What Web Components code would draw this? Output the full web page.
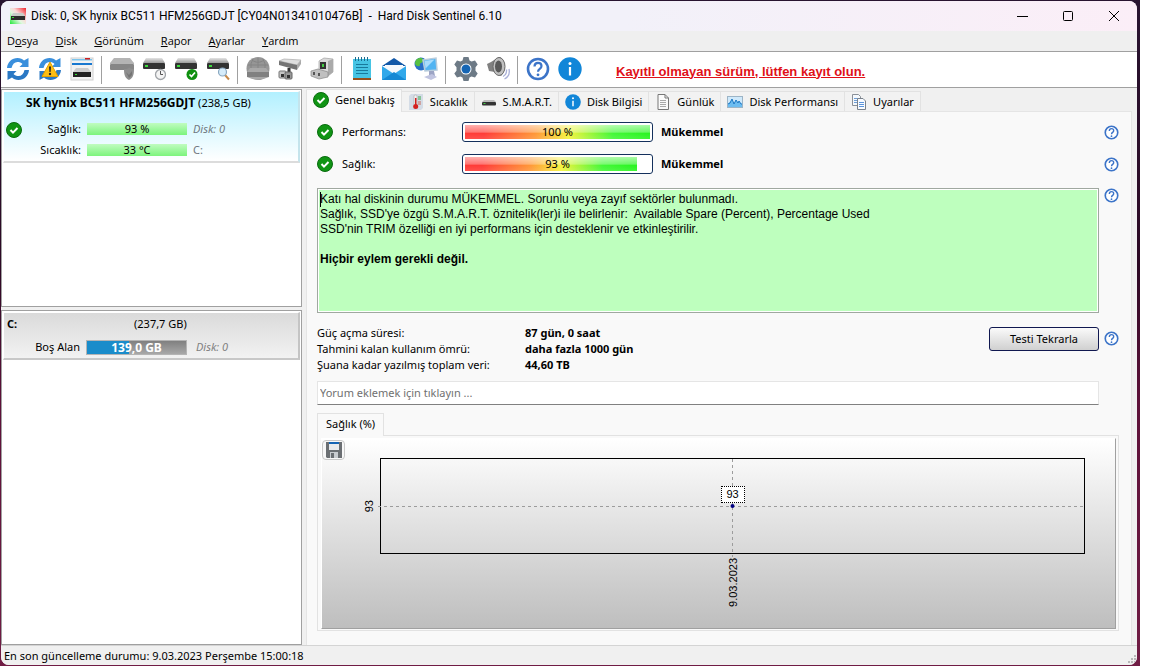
<!DOCTYPE html>
<html lang="tr">
<head>
<meta charset="utf-8">
<title>Hard Disk Sentinel 6.10</title>
<style>
  html, body { margin: 0; }
  body {
    font: 11px/16px "Noto Sans", "Open Sans", sans-serif;
    color: #000;
    background: #fff;
    min-height: 100vh;
  }
</style>
</head>
<body>
<hds-desktop></hds-desktop>
<script>
const grads = {
  disk: '<linearGradient id="g" x1="0" y1="0" x2="0" y2="1"><stop offset="0" stop-color="#e4e4e4"/><stop offset="1" stop-color="#9a9a9a"/></linearGradient>'
};
const drive = `<defs>${grads.disk}</defs><path d="M4 6h16l3 5H1z" fill="url(#g)"/><rect x="1" y="11" width="22" height="6" rx="1" fill="#333"/><rect x="3" y="13" width="3" height="2" fill="#3ddc3d"/>`;
const sync = '<path d="M1 11C1.500 5 6 1 11.500 1c3 0 5 1 6.500 2.500L22.500 1v9h-9l3-3C15 5.600 13.500 5 11.500 5 8.500 5 6.500 7 5.500 11z" fill="#3a8fdc"/><path d="M23 13c-.5 6-5 10-10.500 10-3 0-5-1-6.500-2.500L1.500 23v-9h9l-3 3c1.500 1.400 3 2 5 2 3 0 5-2 6-6z" fill="#2a78c4"/>';
const ICONS = {
  app: ['16', '<defs><linearGradient id="r" x1="1" y1="0" x2="0" y2="1"><stop offset="0" stop-color="#f02028"/><stop offset=".4" stop-color="#fbd8d8"/><stop offset=".6" stop-color="#e0f8e0"/><stop offset="1" stop-color="#20e838"/></linearGradient></defs><rect width="16" height="16" fill="url(#r)"/><path d="M3 5h10l2 3H1z" fill="#c8ccc8"/><rect x="1" y="8" width="14" height="4" fill="#2c2c2c"/><rect x="2" y="9" width="2" height="1" fill="#3d3"/>'],
  sync: ['24', sync],
  syncwarn: ['24', sync + '<path d="M12 5l8 14.500H4z" fill="#fdbe14" stroke="#e0a000" stroke-linejoin="round"/><path d="M11 9.500h2l-.4 5.500h-1.200z" fill="#222"/><circle cx="12" cy="17" r="1.200" fill="#222"/>'],
  panel: ['24', '<rect x="1" y="1" width="22" height="22" fill="#f2f2f2" stroke="#d0d0d0"/><rect x="2" y="2" width="20" height="1.500" fill="#7cc4ec"/><rect x="15" y="1" width="5" height="1.500" fill="#d02020"/><rect x="2" y="6" width="20" height="2" fill="#1878d0"/><path d="M6 11h12l3 4H3z" fill="#ccc"/><rect x="3" y="15" width="18" height="5" fill="#222"/><rect x="5" y="17" width="2" height="1" fill="#3d3"/>'],
  disk1: ['24', '<path d="M4 1h16l4 5v1H0V6z" fill="#b4b4b4"/><rect y="7" width="24" height="6" rx="1" fill="#868686"/><path d="M14 12q5 0 5-2 1 2 5 2c0 6-1 9-5 11-4-2-5-5-5-11z" fill="#8e8e8e"/><path d="M16 15l3 3 3-4v4l-3 3z" fill="#747474"/>'],
  disk2: ['24', '<g transform="translate(0 -5)">' + drive + '</g><circle cx="18.500" cy="17.500" r="5" fill="#f4f4f4" stroke="#a0a4a8" stroke-width="1.300"/><path d="M18.500 14v3.500H21" stroke="#555" fill="none"/>'],
  disk3: ['24', '<g transform="translate(0 -5)">' + drive + '</g><circle cx="18" cy="17.500" r="5.500" fill="#109010"/><path d="M15.500 17.500l2 2 3.500-4" stroke="#fff" stroke-width="1.700" fill="none"/>'],
  disk4: ['24', '<g transform="translate(0 -5)">' + drive + '</g><path d="M19 18l4 4.500" stroke="#c88a4a" stroke-width="2"/><circle cx="16.500" cy="15" r="4" fill="#d6ecfa" stroke="#8aa8c0" stroke-width="1.200"/>'],
  globe: ['24', '<circle cx="12" cy="11.500" r="11.500" fill="#969696"/><path d="M6 3c4 3 8 3 12 0M2 8h20M12 1v10M7 2q-3 5-2 9M17 2q3 5 2 9" stroke="#848484" fill="none"/><path d="M4 11h16l3 4v5q-11 5-22 0v-5z" fill="#a8a8a8"/><rect x="1" y="15" width="22" height="5" fill="#808080"/>'],
  plug: ['24', '<path d="M1 4l5-2 17 1-4 5z" fill="#dedede" stroke="#aaa" stroke-width=".7"/><path d="M1 4l18 4v5L1 8z" fill="#747474"/><path d="M19 8l4-5v4l-4 6z" fill="#aaa"/><path d="M11 11v5" stroke="#333" stroke-width="3"/><rect x="1" y="14" width="7" height="7" rx="1" fill="#c4c4c4" stroke="#777"/><rect x="7" y="15" width="7" height="7" rx="1" fill="#999" stroke="#666"/><path d="M3 17h3v3H3zM9 18h3v3H9z" fill="#333"/>'],
  plug2: ['24', '<path d="M9 4l5-3 9 1v13l-5 4-9-2z" fill="#dadada" stroke="#a0a0a0" stroke-width=".7"/><path d="M18 4l5-2v13l-5 4z" fill="#aaa"/><rect x="10" y="5" width="6" height="7" fill="#333"/><path d="M12 7h2v3h-2z" fill="#4c4"/><path d="M1 14l7-2 10 3v5l-9 2-8-3z" fill="#c0c0c0" stroke="#888" stroke-width=".7"/><path d="M3 15h2v3H3zM8 16h2v3H8z" fill="#555"/>'],
  note: ['24', '<rect x="3" y="2" width="18" height="19" fill="#46c4e4"/><rect x="3" y="21" width="18" height="2" fill="#96501c"/><path d="M5.500 0v4M8.500 0v4M11.500 0v4M14.500 0v4M17.500 0v4" stroke="#1a6d90"/><path d="M6 7.500h12M6 10.500h12M6 13.500h12M6 16.500h12" stroke="#187a9c"/>'],
  mail: ['24', '<path d="M0 9L12 1l12 8z" fill="#1258a8"/><path d="M3 8h18v9H3z" fill="#f4f8fc"/><path d="M0 9l12 8L24 9v14H0z" fill="#30a8ea"/><path d="M0 23l12-8 12 8z" fill="#1488d4"/>'],
  net: ['24', '<circle cx="7" cy="7" r="6.500" fill="#2870c8"/><path d="M2 3c4-4 8-2 7 1s-4 1-3 5C1 10 0 6 2 3z" fill="#58c040"/><path d="M9 3l13-2 1 12-12 1z" fill="#52b4f2" stroke="#b8ccdc" stroke-width="1.500"/><path d="M10.500 4l10-1.500-9 9z" fill="#a8dcfc"/><path d="M15 14h5l1 5h-6z" fill="#9ca4c4"/><path d="M10 20l8-3 5 3-6 3z" fill="#c0c4e0"/>'],
  gear: ['24', '<path d="M9.500 0h5l1 3.500 2 1L21 3.500l2.700 4-2.200 2.800v3.400l2.200 2.800-2.700 4-3.500-1-2 1-1 3.500h-5l-1-3.500-2-1-3.500 1-2.700-4 2.200-2.800v-3.400L.3 7.500 3 3.500l3.500 1 2-1z" fill="#6d7a86"/><circle cx="12" cy="12" r="5.500" fill="#fff"/><circle cx="12" cy="12" r="4.500" fill="#1565b4"/>'],
  sound: ['24', '<path d="M1 7l4-2 8-5c7 1 7 16 2 19l-6-4-6-1z" fill="#808080"/><ellipse cx="13" cy="9.500" rx="6" ry="9" fill="#c0c0c0" stroke="#686868"/><ellipse cx="12.500" cy="9.500" rx="3.500" ry="6" fill="#585858"/><path d="M17 19.500q4-2 3.500-7M18.500 22q6-3 4.500-10" stroke="#aab0d8" stroke-width="1.300" fill="none"/>'],
  help: ['24', '<circle cx="12" cy="12" r="10" fill="#fff" stroke="#3c74c8" stroke-width="2.600"/><path d="M8.500 9.500c0-5 7-4.500 7-.5 0 3-3.500 2.700-3.500 5.700" stroke="#3c74c8" stroke-width="2.200" fill="none"/><circle cx="12" cy="17.800" r="1.400" fill="#3c74c8"/>'],
  info: ['24', '<circle cx="12" cy="12" r="11.700" fill="#1186d8"/><circle cx="12" cy="6.500" r="1.500" fill="#fff"/><path d="M12 10v8.500" stroke="#fff" stroke-width="2.200"/>'],
  ok: ['16', '<circle cx="8" cy="8" r="7.500" fill="#109414" stroke="#0a6c10"/><path d="M4.500 8l2.500 2.600L11.500 6" stroke="#fff" stroke-width="2" fill="none"/>'],
  thermo: ['16', '<path d="M1 2l2-2h12v14l-2 2H1z" fill="#d4dce6"/><rect x="6" y="1" width="3" height="11" rx="1" fill="#f4f4f4" stroke="#999" stroke-width=".5"/><rect x="7" y="4" width="1.500" height="8" fill="#d02020"/><circle cx="7.700" cy="12.500" r="2.500" fill="#d42020"/><path d="M10 3h3M10 5h3" stroke="#38a848"/><path d="M10 8h3M10 10h3" stroke="#c86858"/>'],
  drive: ['16', '<path d="M3 6h10l2 2H1z" fill="#bbb"/><rect x="1" y="8" width="14" height="3.500" rx="1" fill="#333"/><rect x="2.500" y="9" width="2" height="1" fill="#4c4"/>'],
  page: ['16', '<path d="M3 .5h7l3.500 3.500v11.500H3z" fill="#fafafa" stroke="#777"/><path d="M10 .5V4h3.500" fill="none" stroke="#777"/><path d="M5 6.500h6M5 8.500h6M5 10.500h6M5 12.500h6" stroke="#aaa"/>'],
  perf: ['16', '<rect x=".5" y="2.500" width="15" height="11" fill="#cfe9fb" stroke="#9cb4c6"/><path d="M1 13V10l2-2 2-3 2 5 2-4 2 3 1-2 2 3h1v3z" fill="#6cbcf0"/><path d="M1 10l2-1 2-4 2 5 2-4 2 3 1-2 2 3h1" stroke="#1c78c4" fill="none"/>'],
  copy: ['16', '<path d="M1.500.5h6l2 2v9h-8z" fill="#f4f8fc" stroke="#8a9098"/><path d="M3 4.500h4M3 6.500h4M3 8.500h3" stroke="#6f9fd8"/><path d="M6.500 4.500h5.500l2.500 2.500v8.500h-8z" fill="#f8fbff" stroke="#7a828c"/><path d="M8 8.500h5M8 10.500h5M8 12.500h5" stroke="#5c94dc"/>'],
  save: ['16', '<path d="M0 0h16v16H1l-1-1z" fill="#6b6f73"/><rect x="3" y="0" width="10" height="8" fill="#e8eaec"/><rect x="3" y="0" width="10" height="2" fill="#1464b4"/><rect x="4" y="10" width="8" height="6" fill="#c8ccd0"/><rect x="5" y="11" width="3" height="5" fill="#6b6f73"/>'],
  min: ['12', '<path d="M1 6.500h11" stroke="#000"/>'],
  max: ['12', '<rect x="1.500" y="1.500" width="9" height="9" rx="1" fill="none" stroke="#000"/>'],
  close: ['12', '<path d="M1 1l10 10M11 1L1 11" stroke="#000"/>'],
  grip: ['12', '<path d="M9 2h2v2H9zM6 5h2v2H6zM9 5h2v2H9zM3 8h2v2H3zM6 8h2v2H6zM9 8h2v2H9z" fill="#b8b8b8"/>']
};

function define(name, render, connected) {
  customElements.define(name, class extends HTMLElement {
    constructor() { super(); this.attachShadow({ mode: 'open' }); }
    connectedCallback() {
      const a = (key, fallback = '') => this.getAttribute(key) ?? fallback;
      this.shadowRoot.innerHTML = render(a, this);
      if (connected) connected(this);
    }
  });
}

define('hds-icon', a => {
  const [box, art] = ICONS[a('name')];
  return `<style>
    :host { display: block; flex: none; width: ${a('size', '16')}px; height: ${a('size', '16')}px; }
    svg { display: block; width: 100%; height: 100%; }
  </style><svg viewBox="0 0 ${box} ${box}" aria-hidden="true">${art}</svg>`;
});

define('hds-title-bar', () => `<style>
    :host { display: flex; align-items: center; height: 30px; padding-left: 9px;
      background: linear-gradient(90deg, #f2f1f9 0 55%, #fbeef7); }
    h1 { flex: 1; margin: 0 0 0 5px; font: 12px/16px Roboto, "Noto Sans", sans-serif; white-space: pre; }
    button { display: grid; place-items: center; width: 46px; height: 30px; padding: 0; border: 0; background: none; }
  </style>
  <hds-icon name="app"></hds-icon>
  <h1><slot></slot></h1>
  <button aria-label="Küçült"><hds-icon name="min" size="12"></hds-icon></button>
  <button aria-label="Ekranı kapla"><hds-icon name="max" size="12"></hds-icon></button>
  <button aria-label="Kapat"><hds-icon name="close" size="12"></hds-icon></button>`);

define('hds-menu-bar', a => `<style>
    :host { display: flex; gap: 17px; height: 20px; padding-left: 6px; background: #efefef; font-family: "Open Sans", sans-serif; }
    button { padding: 0; border: 0; background: none; font: inherit; line-height: 20px; }
  </style>` + a('items').split(',').map(t => {
    const i = t === 'Dosya' ? 1 : 0;
    return `<button>${t.slice(0, i)}<u>${t[i]}</u>${t.slice(i + 1)}</button>`;
  }).join(''));

define('hds-tool-bar', a => `<style>
    :host { display: flex; align-items: center; height: 35px; padding-left: 1px; background: #fff;
      border-top: 1px solid #a0a0a0; border-bottom: 1px solid #a0a0a0; }
    button { display: grid; place-items: center; width: 32px; height: 34px; padding: 0 0 1px; border: 0; background: none; }
    i { width: 1px; height: 28px; margin: 0 4px 0 3px; background: #a0a0a0; }
    ::slotted(a) { margin-left: 30px; padding-top: 4px; color: #e01018; font: bold 13px/16px "Liberation Sans", Arial, sans-serif; }
  </style>` + a('groups').split('|').map(g => g.trim().split(' ').map(n =>
    `<button aria-label="${n}"><hds-icon name="${n}" size="24"></hds-icon></button>`).join('')).join('<i></i>') + '<slot></slot>');

define('hds-bar', a => `<style>
    :host { display: block; height: 12px; text-align: center; line-height: 12px;
      background: linear-gradient(#c0fcc0, #7cf47c); }
    :host([kind="space"]) { height: 15px; font-weight: bold; font-size: 12px; line-height: 13px; color: #fff; border: 1px solid #b4b4b4; box-sizing: border-box;
      background: linear-gradient(90deg, #1a8cca 42%, transparent 42%), linear-gradient(#808080, #a8a8a8); }
  </style><slot></slot>`);

define('hds-disk-card', () => `<style>
    :host { display: grid; grid-template-columns: 20px 61px 100px 1fr; row-gap: 4px;
      padding: 3px 0 3px 2px; border: 1px solid #fff; border-right: 2px solid #c4e4ec; border-bottom: 2px solid #dcdcdc;
      background: linear-gradient(#b2f0ff, #fff); align-items: center; }
    .head { grid-column: 2 / -1; line-height: 16px; padding-bottom: 5px; white-space: pre; }
    .ok { grid-column: 1; grid-row: 2; margin-top: 2px; }
    .label { grid-column: 2; text-align: right; padding-right: 6px; }
    .tail { padding-left: 6px; color: #707880; }
  </style>
  <div class="head"><slot name="head"></slot></div>
  <hds-icon class="ok" name="ok"></hds-icon>
  <div class="label">Sağlık:</div><hds-bar><slot name="health"></slot></hds-bar><em class="tail"><slot name="disk"></slot></em>
  <div class="label">Sıcaklık:</div><hds-bar><slot name="temp"></slot></hds-bar><div class="tail"><slot name="vol"></slot></div>`);

define('hds-volume-card', () => `<style>
    :host { display: grid; grid-template-columns: 80px 101px 1fr; align-items: center; row-gap: 7px;
      padding: 3px 0 3px 2px; border: 1px solid #fff; border-right: 2px solid #c4c4c4; border-bottom: 2px solid #c8c8c8;
      background: linear-gradient(#dadada, #f2f2f2); }
    .size { padding-left: 48px; white-space: nowrap; }
    .label { text-align: right; padding-right: 6px; grid-column: 1; white-space: nowrap; }
    .name { padding-left: 1px; }
    em { color: #808080; padding-left: 9px; }
  </style>
  <b class="name"><slot name="name"></slot></b><div class="size"><slot name="size"></slot></div>
  <div class="label">Boş Alan</div><hds-bar kind="space"><slot name="free"></slot></hds-bar><em><slot name="disk"></slot></em>`);

define('hds-side-panel', () => `<style>
    :host { display: flex; flex-direction: column; gap: 3px; width: 301px; flex: none; }
    section { border: 1px solid #a0a0a0; background: #fff; padding: 1px; box-sizing: border-box; min-height: 0; }
    .disks { flex: 218 1 0; }
    .volumes { flex: 336 1 0; }
  </style>
  <section class="disks"><slot name="disks"></slot></section>
  <section class="volumes"><slot name="volumes"></slot></section>`);

define('hds-tab', a => `<style>
    :host { display: block; margin-top: 2px; }
    :host([selected]) { margin: 0 0 -1px; position: relative; }
    button { display: flex; align-items: center; gap: 6px; height: 20px; padding: 0 var(--tab-padding, 6px); font: inherit; white-space: nowrap;
      border: 1px solid #e2e2e2; border-width: 1px 1px 0 0; background: #f2f2f2; }
    :host([selected]) button { height: 23px; border-left-width: 1px; padding-bottom: 2px; background: #f9f9f9; }
  </style><button role="tab">${a('icon') ? `<hds-icon name="${a('icon')}"></hds-icon>` : ''}<slot></slot></button>`);

define('hds-gauge', a => `<style>
    :host { display: grid; grid-template-columns: 20px 125px 191px 1fr; align-items: center; height: 20px; }
    .label { padding-left: 5px; }
    .meter { box-sizing: border-box; height: 20px; padding: 2px; border: 1px solid #14305c; border-radius: 3px; background: #fff; position: relative; }
    .fill { height: 14px; width: ${a('value')}%;
      background: linear-gradient(rgba(255,255,255,.6), rgba(255,255,255,.3) 50%, rgba(255,255,255,0) 60%, rgba(255,255,255,.1)),
      linear-gradient(90deg, #ff3c38 10%, #ff9838 38%, #f4f43c 56%, #44f838 80%, #28f420); }
    .text { position: absolute; inset: 0; text-align: center; line-height: 18px; }
    b { padding-left: 8px; }
  </style>
  <hds-icon name="ok"></hds-icon><span class="label">${a('label')}</span>
  <div class="meter" role="meter" aria-label="${a('label')}" aria-valuenow="${a('value')}"><div class="fill"></div><div class="text">${a('value')} %</div></div>
  <b><slot></slot></b>`);

define('hds-help', () => `<style>
    :host { display: block; }
    button { display: block; padding: 0; border: 0; background: none; }
  </style><button aria-label="Yardım"><hds-icon name="help" size="15"></hds-icon></button>`);

define('hds-status-text', () => `<style>
    :host { display: block; box-sizing: border-box; min-height: 125px; padding: 3px 1px 1px; border: 1px solid #a0a8a0;
      box-shadow: inset 0 0 0 1px #fff; background: #beffbe; font: 12px/15px "Liberation Sans", Arial, sans-serif; }
    .edit { padding-left: 1px; outline: none; }
    .caret { display: block; width: 1px; height: 15px; margin-bottom: -15px; background: #000; }
    ::slotted(p) { margin: 0 0 15px; white-space: pre-wrap; }
  </style><div class="edit" role="textbox" aria-multiline="true" aria-label="Durum"><span class="caret"></span><slot></slot></div>`);

define('hds-facts', () => `<style>
    :host { display: block; }
    dl { display: grid; grid-template-columns: 208px 1fr; margin: 0; }
    dt, dd { margin: 0; line-height: 16px; }
    dd { font-weight: bold; }
  </style>
  <dl>
    <dt>Güç açma süresi:</dt><dd>87 gün, 0 saat</dd>
    <dt>Tahmini kalan kullanım ömrü:</dt><dd>daha fazla 1000 gün</dd>
    <dt>Şuana kadar yazılmış toplam veri:</dt><dd>44,60 TB</dd>
  </dl>`);

define('hds-chart', a => `<style>
    :host { display: grid; grid-template: 19px 96px 1fr / 58px 1fr 30px; position: relative; box-sizing: border-box;
      font: 11px/12px "Liberation Sans", Arial, sans-serif;
      background: linear-gradient(#fff, #bebebe); border: 1px solid #fff; border-right: 1px solid #a0a0a0; border-bottom: 1px solid #a0a0a0; }
    button { position: absolute; left: 0; top: 1px; width: 23px; height: 20px; display: grid; place-items: center; padding: 0;
      border: 1px solid #c8c8c8; border-radius: 4px; background: #f8f8f8; }
    .plot { grid-area: 2 / 2; position: relative; border: 1px solid #000; }
    .y { grid-area: 2 / 1; place-self: center end; margin-right: 5px; }
    .x { grid-area: 3 / 2; place-self: start center; padding-top: 4px; }
    .x, .y { writing-mode: vertical-rl; }
    .x span, .y span { display: block; transform: rotate(180deg); }
    svg { position: absolute; inset: 0; width: 100%; height: 100%; overflow: visible; }
    line { stroke: #9c9c9c; stroke-dasharray: 3 3; }
    .tip { position: absolute; left: 50%; top: 27px; width: 22px; margin-left: -12px; line-height: 15px; text-align: center;
      background: #fff; border: 1px dotted #000; }
  </style>
  <button aria-label="Kaydet"><hds-icon name="save"></hds-icon></button>
  <div class="y"><span>${a('value')}</span></div>
  <div class="plot">
    <svg aria-hidden="true"><line x1="-3" x2="100%" y1="50%" y2="50%" shape-rendering="crispEdges"/><line x1="50%" x2="50%" y1="0" y2="104%" shape-rendering="crispEdges"/><circle cx="50%" cy="50%" r="2" fill="#000080"/></svg>
    <div class="tip">${a('value')}</div>
  </div>
  <div class="x"><span>${a('date')}</span></div>`);

define('hds-overview', () => `<style>
    :host { display: flex; flex-direction: column; flex: 1; min-width: 0; margin: 0 5px 0 4px; }
    nav { display: flex; height: 22px; }
    main { flex: 1; display: flex; flex-direction: column; border: 1px solid #e5e5e5; border-bottom: 0; background: #f9f9f9; padding: 10px 12px 14px 10px; }
    .row { display: grid; grid-template-columns: 1fr 15px; column-gap: 5px; align-items: center; margin-bottom: 12px; }
    .row.top { align-items: start; margin-top: 2px; margin-bottom: 12px; }
    .facts { display: flex; align-items: start; justify-content: space-between; }
    .facts button { width: 110px; height: 24px; margin-top: 2px; border: 1px solid #101850; border-radius: 3px; padding: 0; font: inherit;
      background: linear-gradient(#fafafa, #d0d0d0); }
    .row.info { align-items: start; margin-bottom: 8px; }
    .info hds-help { margin-top: 6px; }
    input { box-sizing: border-box; margin-right: 20px; height: 24px; padding: 0 2px 2px; font: inherit; border: 1px solid #e5e5e5; border-bottom-color: #808080; background: #fff; }
    input::placeholder { color: #707070; opacity: 1; }
    .sub { --tab-padding: 8px; display: flex; height: 22px; margin-top: 8px; }
    .chartbox { flex: 1; display: grid; border: 1px solid #e2e2e2; padding: 2px 2px 1px 3px; }
  </style>
  <nav role="tablist"><slot name="tabs"></slot></nav>
  <main>
    <div class="row"><hds-gauge label="Performans:" value="100">Mükemmel</hds-gauge><hds-help></hds-help></div>
    <div class="row"><hds-gauge label="Sağlık:" value="93">Mükemmel</hds-gauge><hds-help></hds-help></div>
    <div class="row top"><hds-status-text><slot name="report"></slot></hds-status-text><hds-help></hds-help></div>
    <div class="row info"><div class="facts"><hds-facts></hds-facts><button>Testi Tekrarla</button></div><hds-help></hds-help></div>
    <input aria-label="Yorum" placeholder="Yorum eklemek için tıklayın ...">
    <div class="sub"><hds-tab selected>Sağlık (%)</hds-tab></div>
    <div class="chartbox"><hds-chart value="93" date="9.03.2023"></hds-chart></div>
  </main>`, el => {
    const box = el.shadowRoot.querySelector('hds-status-text');
    const report = document.createElement('p');
    report.textContent = el.getAttribute('report').replace(/\|/g, '\n');
    const verdict = document.createElement('p');
    verdict.append(document.createElement('b'));
    verdict.firstChild.textContent = el.getAttribute('verdict');
    box.replaceChildren(report, verdict);
  });

define('hds-status-bar', () => `<style>
    :host { display: flex; justify-content: space-between; align-items: end; height: 19px; padding-left: 3px; border-top: 1px solid #d4d4d4; background: #f0f0f0; }
    span { line-height: 19px; }
  </style><span><slot></slot></span><hds-icon name="grip" size="12"></hds-icon>`);

define('hds-desktop', () => `<style>
    :host { display: flex; min-height: 100vh; box-sizing: border-box; padding: 1px 3px 1px 1px; margin-right: 12px;
      background: linear-gradient(#281430, #2c0824 40%, #5c1038 60%, #701c44); }
    .window { flex: 1; min-width: 0; display: flex; flex-direction: column; overflow: hidden; border-radius: 8px; background: #f0f0f0; }
    .body { flex: 1; display: flex; padding-top: 1px; }
    .model { font-size: 12px; }
  </style>
  <div class="window">
    <hds-title-bar>Disk: 0, SK hynix BC511 HFM256GDJT [CY04N01341010476B]  -  Hard Disk Sentinel 6.10</hds-title-bar>
    <hds-menu-bar items="Dosya,Disk,Görünüm,Rapor,Ayarlar,Yardım"></hds-menu-bar>
    <hds-tool-bar groups="sync syncwarn panel|disk1 disk2 disk3 disk4|globe plug plug2|note mail net|gear sound|help info">
      <a href="#kayit">Kayıtlı olmayan sürüm, lütfen kayıt olun.</a>
    </hds-tool-bar>
    <div class="body">
      <hds-side-panel>
        <hds-disk-card slot="disks">
          <span slot="head"><b class="model">SK hynix BC511 HFM256GDJT</b> (238,5 GB)</span>
          <span slot="health">93 %</span><span slot="temp">33 °C</span>
          <span slot="disk">Disk: 0</span><span slot="vol">C:</span>
        </hds-disk-card>
        <hds-volume-card slot="volumes">
          <span slot="name">C:</span><span slot="size">(237,7 GB)</span>
          <span slot="free">139,0 GB</span><span slot="disk">Disk: 0</span>
        </hds-volume-card>
      </hds-side-panel>
      <hds-overview verdict="Hiçbir eylem gerekli değil."
        report="Katı hal diskinin durumu MÜKEMMEL. Sorunlu veya zayıf sektörler bulunmadı.|Sağlık, SSD'ye özgü S.M.A.R.T. öznitelik(ler)i ile belirlenir:  Available Spare (Percent), Percentage Used|SSD'nin TRIM özelliği en iyi performans için desteklenir ve etkinleştirilir.">
        <hds-tab slot="tabs" icon="ok" selected>Genel bakış</hds-tab>
        <hds-tab slot="tabs" icon="thermo">Sıcaklık</hds-tab>
        <hds-tab slot="tabs" icon="drive">S.M.A.R.T.</hds-tab>
        <hds-tab slot="tabs" icon="info">Disk Bilgisi</hds-tab>
        <hds-tab slot="tabs" icon="page">Günlük</hds-tab>
        <hds-tab slot="tabs" icon="perf">Disk Performansı</hds-tab>
        <hds-tab slot="tabs" icon="copy">Uyarılar</hds-tab>
      </hds-overview>
    </div>
    <hds-status-bar>En son güncelleme durumu: 9.03.2023 Perşembe 15:00:18</hds-status-bar>
  </div>`);
</script>
</body>
</html>
